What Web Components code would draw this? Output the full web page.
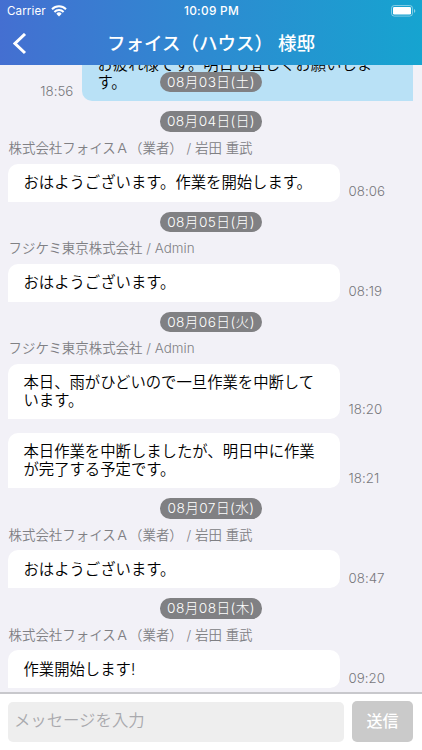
<!DOCTYPE html>
<html lang="ja"><head><meta charset="utf-8"><title>チャット</title>
<style>html,body{margin:0;height:100%}body{font-family:Inter,"Noto Sans CJK JP",sans-serif;overflow:hidden}</style></head>
<body>
<chat-app>
<status-bar slot="head"></status-bar>
<nav-bar slot="head">フォイス（ハウス） 様邸</nav-bar>
<chat-message own time="18:56">お疲れ様です。明日も宜しくお願いしま<br>す。</chat-message>
<date-pill floating>08月03日(土)</date-pill>
<date-pill>08月04日(日)</date-pill>
<sender-name>株式会社フォイスＡ（業者） / 岩田 重武</sender-name>
<chat-message time="08:06">おはようございます。作業を開始します。</chat-message>
<date-pill>08月05日(月)</date-pill>
<sender-name>フジケミ東京株式会社 / Admin</sender-name>
<chat-message time="08:19">おはようございます。</chat-message>
<date-pill>08月06日(火)</date-pill>
<sender-name>フジケミ東京株式会社 / Admin</sender-name>
<chat-message time="18:20">本日、雨がひどいので一旦作業を中断して<br>います。</chat-message>
<chat-message next time="18:21">本日作業を中断しましたが、明日中に作業<br>が完了する予定です。</chat-message>
<date-pill>08月07日(水)</date-pill>
<sender-name>株式会社フォイスＡ（業者） / 岩田 重武</sender-name>
<chat-message time="08:47">おはようございます。</chat-message>
<date-pill>08月08日(木)</date-pill>
<sender-name>株式会社フォイスＡ（業者） / 岩田 重武</sender-name>
<chat-message time="09:20">作業開始します!</chat-message>
<message-composer slot="foot"></message-composer>
</chat-app>
<script>
const define=(name,html)=>customElements.define(name,class extends HTMLElement{
 constructor(){super();this.attachShadow({mode:'open'}).innerHTML=html;}
 connectedCallback(){const t=this.shadowRoot.querySelector('time');if(t)t.textContent=this.getAttribute('time');}
});
define('chat-app',`<style>
:host{display:flex;flex-direction:column;width:422px;height:750px;background:#f2f1f7;overflow:hidden}
header{height:65.4px;flex:none;background:linear-gradient(90deg,#446fd1,#2d8bd1 50%,#16a4d0)}
main{flex:1;min-height:0;overflow:hidden;position:relative}
.track{display:flex;flex-direction:column;margin-top:-19.3px}
</style><header><slot name="head"></slot></header><main><div class="track"><slot></slot></div></main><slot name="foot"></slot>`);
define('status-bar',`<style>
:host{display:grid;grid-template-columns:1fr auto 1fr;align-items:center;height:22px;color:#fff;font-size:11.6px;padding:0 6px 0 7px}
.l{display:flex;align-items:center;gap:5px;letter-spacing:.1px}b{font-weight:500;font-size:11.8px;letter-spacing:.3px}.bat{justify-self:end;display:block}
svg{display:block}
</style><span class="l"><span>Carrier</span><svg width="16" height="12" viewBox="0 0 16 12"><g fill="none" stroke="#fff" stroke-width="2"><path d="M1 4.2a10 10 0 0 1 14 0"/><path d="M3.4 7a6.5 6.5 0 0 1 9.2 0"/></g><path d="M5.3 8.7a3.8 3.8 0 0 1 5.4 0L8 11.5z" fill="#fff"/></svg></span><b>10:09 PM</b>
<svg class="bat" width="25" height="12" viewBox="0 0 25 12"><rect x=".5" y=".5" width="21" height="10.6" rx="2.8" fill="none" stroke="#fff" stroke-opacity=".45"/><rect x="2" y="2" width="18" height="7.6" rx="1.3" fill="#fff"/><path d="M23 4v3.8q1.3-.6 1.3-1.9T23 4" fill="#fff" fill-opacity=".5"/></svg>`);
define('nav-bar',`<style>
:host{display:grid;grid-template-columns:40px 1fr 40px;align-items:center;height:43.4px;color:#fff;font:500 18.55px/42px Inter,"Noto Sans CJK JP",sans-serif;text-align:center;white-space:nowrap}
svg{display:block;margin-left:13px}span{transform:translateY(-.6px)}
</style><svg width="14" height="22" viewBox="0 0 14 22"><path d="M12 1 2 10.5l10 9.500" fill="none" stroke="#fff" stroke-width="3"/></svg><span><slot></slot></span>`);
define('date-pill',`<style>
:host{display:block;box-sizing:border-box;align-self:center;width:102px;height:20.4px;border-radius:10.2px;background:#808083;color:#fff;font-size:13.7px;font-weight:300;line-height:20.5px;text-align:center;white-space:nowrap;letter-spacing:.4px;margin-top:10px}
:host([floating]){position:absolute;top:6.6px;left:160px;margin:0}
</style><slot></slot>`);
define('sender-name',`<style>
:host{display:block;height:20px;margin:6.4px 0 5.4px 8.5px;font-size:13.45px;font-weight:350;line-height:21px;color:#808084;white-space:nowrap}
</style><slot></slot>`);
define('chat-message',`<style>
:host{display:flex;align-items:flex-end;padding-left:8.4px}
:host([next]){margin-top:13.6px}
.b{box-sizing:border-box;width:331.6px;padding:10.4px 0 10px 15.1px;border-radius:10px 10px 10px 0;background:#fff;color:#000;font-size:15.35px;font-weight:350;line-height:17.5px;white-space:nowrap}
time{font-size:13.3px;font-weight:300;line-height:16px;color:#78787c;margin:0 9px 2.3px 8.5px;letter-spacing:.03px}
:host([own]){flex-direction:row-reverse;padding:0 9px 0 0}
:host([own]) .b{width:330.6px;border-radius:10px 10px 0 10px;background:#b9e1f6}
</style><div class="b"><slot></slot></div><time></time>`);
define('message-composer',`<style>
:host{display:flex;box-sizing:border-box;height:58px;flex:none;border-top:2px solid #c8c8cc;background:#fff;padding:7px 9px 8px 8.4px;gap:8px;align-items:flex-end;font-size:16.4px}
.i{box-sizing:border-box;width:335.6px;height:39.7px;border-radius:5px;background:#eee;color:#a9a9ad;padding-left:5.5px;line-height:36px;font-weight:350}
button{flex:1;height:40.7px;border:0;border-radius:5px;background:#cacaca;color:#fff;font:500 16px/36px "Noto Sans CJK JP",sans-serif;padding:0 0 4px}
</style><div class="i">メッセージを入力</div><button>送信</button>`);
</script></body></html>
